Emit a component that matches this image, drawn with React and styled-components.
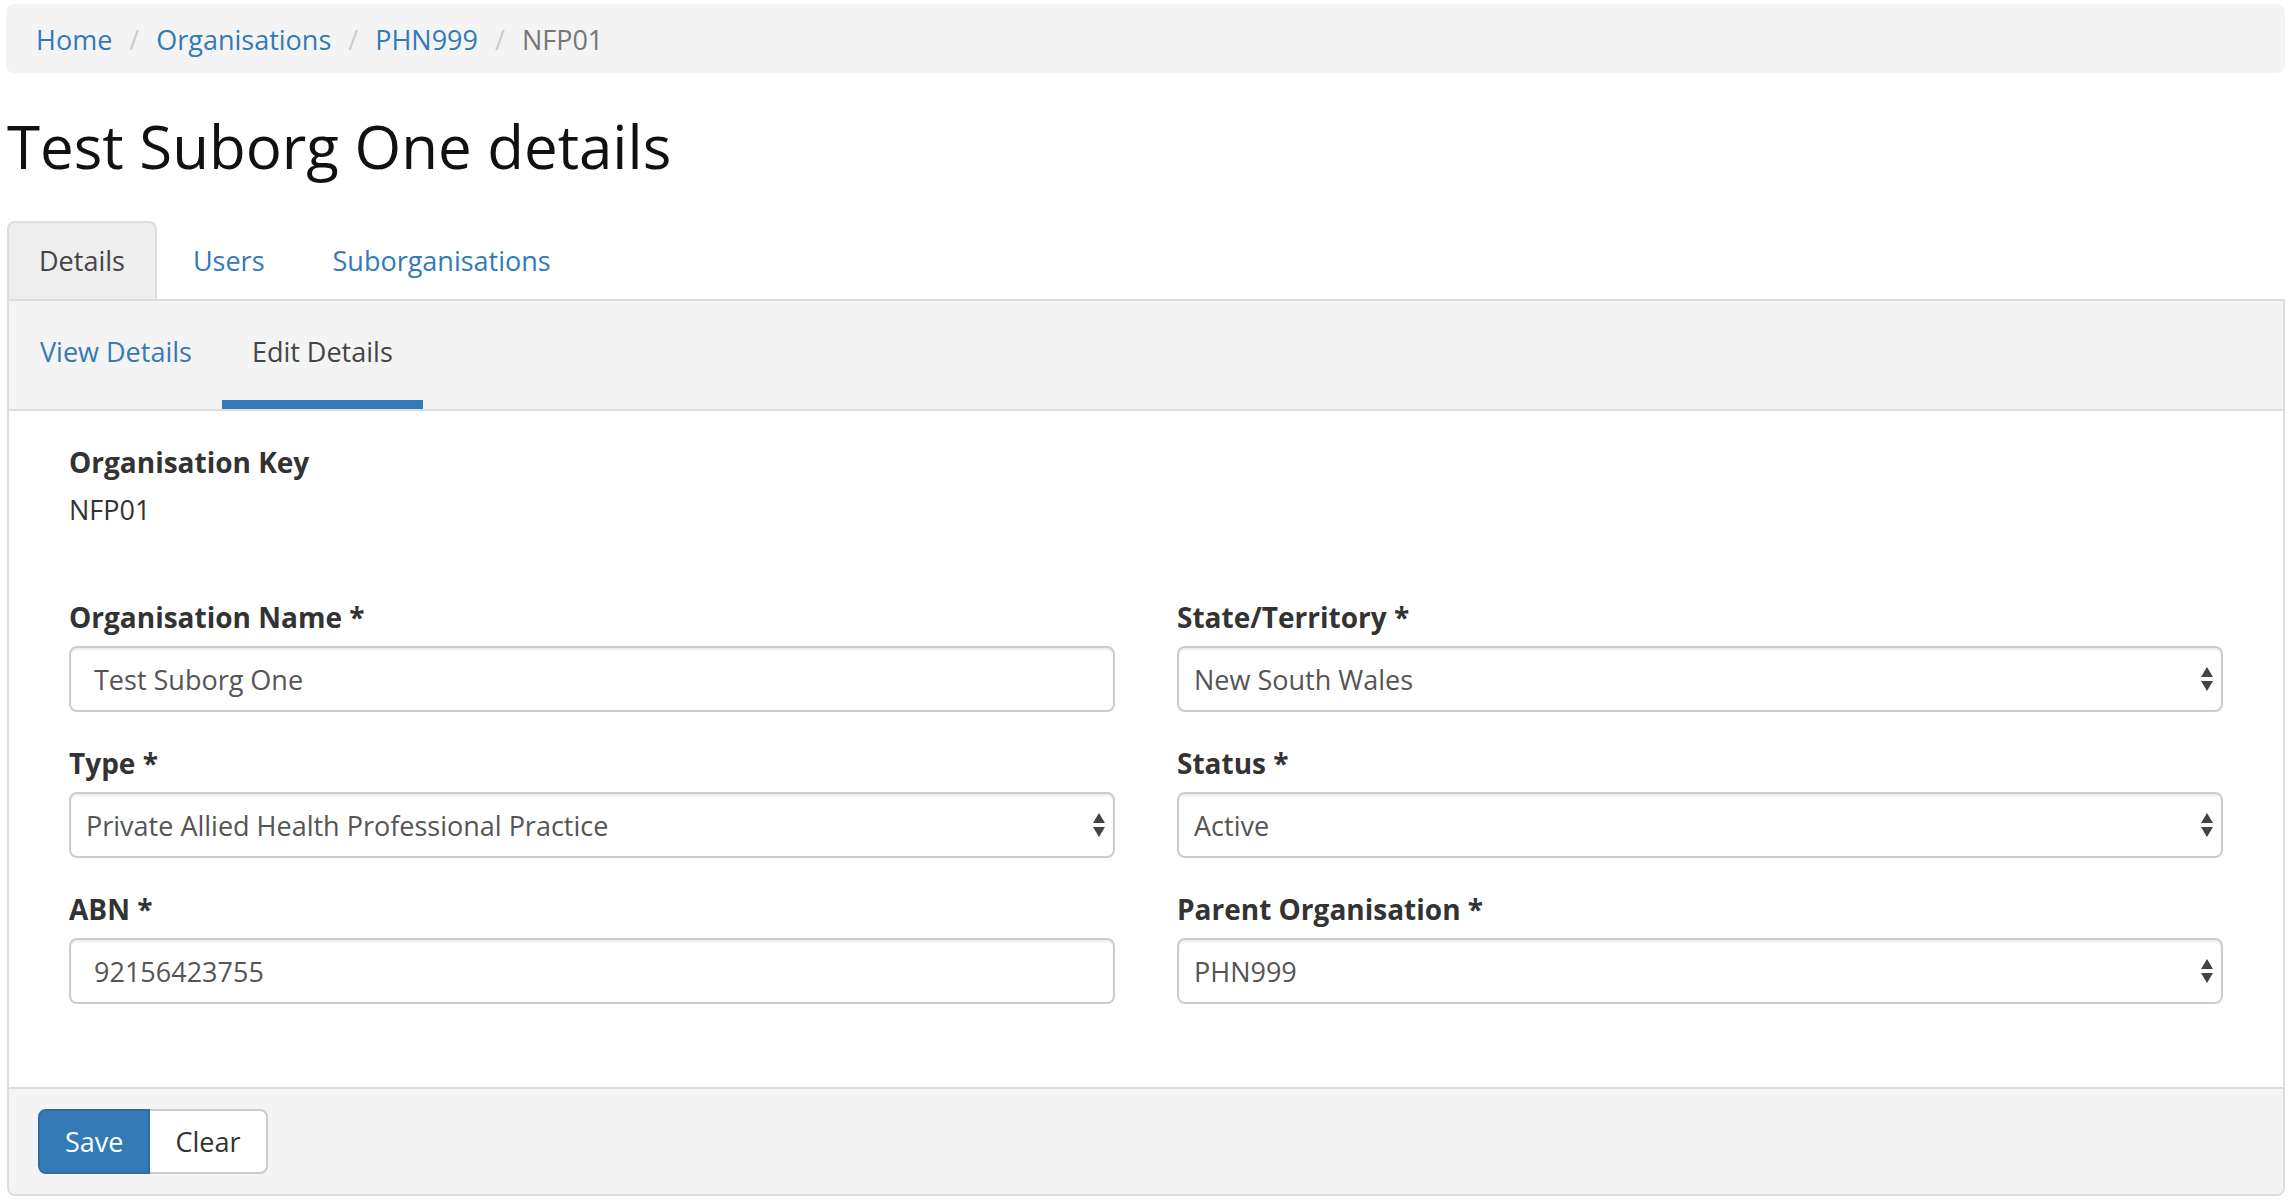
import React from "react";
import styled, { createGlobalStyle } from "styled-components";

const Global = createGlobalStyle`
  html, body { margin: 0; padding: 0; background: #fff; }
  body { font-family: "Open Sans", "Liberation Sans", sans-serif; font-size: 27px; line-height: 1.43; color: #333; }
  * { box-sizing: border-box; }
`;

const Page = styled.div`
  padding: 4px 9px 0 6px;
`;

const Breadcrumb = styled.nav`
  display: flex;
  align-items: center;
  height: 69px;
  padding: 2px 30px 0;
  background: #f4f4f4;
  border-radius: 8px;
  font-size: 27px;
  line-height: 38px;
`;

const Crumb = styled.a`
  color: ${(p) => (p.$active ? "#777" : "#337ab7")};
  text-decoration: none;
`;

const Sep = styled.span`
  color: #ccc;
  margin: 0 17px;
`;

const Title = styled.h1`
  margin: 40px 0 42px 1px;
  font-size: 60px;
  font-weight: 400;
  line-height: 66px;
  color: #111;
`;

const TabList = styled.div`
  display: flex;
  padding-left: 1px;
`;

const Tab = styled.a`
  display: block;
  margin-right: 4px;
  padding: 19px 30px 19px;
  border: 2px solid ${(p) => (p.$active ? "#ddd" : "transparent")};
  border-bottom: none;
  border-radius: 8px 8px 0 0;
  background: ${(p) => (p.$active ? "#eeeeee" : "transparent")};
  color: ${(p) => (p.$active ? "#444" : "#337ab7")};
  text-decoration: none;
  line-height: 38px;
`;

const Panel = styled.div`
  margin-left: 1px;
  border: 2px solid #ddd;
  border-radius: 0 0 8px 8px;
  overflow: hidden;
`;

const SubBar = styled.div`
  display: flex;
  background: #f4f4f4;
  border-bottom: 2px solid #ddd;
  padding-left: 1px;
`;

const SubTab = styled.a`
  display: flex;
  align-items: center;
  height: 108px;
  padding: 2px 30px 0;
  border-bottom: 9px solid ${(p) => (p.$active ? "#337ab7" : "transparent")};
  color: ${(p) => (p.$active ? "#444" : "#337ab7")};
  text-decoration: none;
  line-height: 38px;
`;

const Body = styled.div`
  padding: 32px 60px 51px 60px;
  background: #fff;
`;

const KeyBlock = styled.div`
  margin-bottom: 69px;
`;

const Label = styled.label`
  display: block;
  font-size: 28px;
  font-weight: 700;
  color: #333;
  line-height: 38px;
  margin-bottom: 10px;
`;

const Value = styled.div`
  line-height: 38px;
  color: #333;
`;

const Grid = styled.div`
  display: grid;
  grid-template-columns: 1fr 1fr;
  column-gap: 62px;
`;

const Group = styled.div`
  margin-bottom: 32px;
`;

const fieldBase = `
  display: block;
  width: 100%;
  height: 66px;
  border: 2px solid #ccc;
  border-radius: 8px;
  box-shadow: inset 0 2px 2px rgba(0, 0, 0, 0.075);
  background: #fff;
  font-family: "Open Sans", "Liberation Sans", sans-serif;
  font-size: 27px;
  color: #555;
  outline: none;
`;

const TextInput = styled.input`
  ${fieldBase}
  padding: 0 23px;
`;

const SelectWrap = styled.div`
  position: relative;
`;

const Select = styled.select`
  ${fieldBase}
  appearance: none;
  -webkit-appearance: none;
  padding: 0 40px 0 15px;
`;

const Arrows = styled.svg`
  position: absolute;
  right: 10px;
  top: 21px;
  pointer-events: none;
`;

const Footer = styled.div`
  display: flex;
  padding: 20px 29px 20px;
  background: #f4f4f4;
  border-top: 2px solid #ddd;
`;

const Button = styled.button`
  height: 65px;
  padding: 0 25px;
  font-family: "Open Sans", "Liberation Sans", sans-serif;
  font-size: 27px;
  border: 2px solid ${(p) => (p.$primary ? "#2e6da4" : "#ccc")};
  background: ${(p) => (p.$primary ? "#337ab7" : "#fff")};
  color: ${(p) => (p.$primary ? "#fff" : "#333")};
  border-radius: ${(p) => (p.$primary ? "8px 0 0 8px" : "0 8px 8px 0")};
  ${(p) => (p.$primary ? "" : "border-left: none;")}
`;

function SelectField({ value }) {
  return (
    <SelectWrap>
      <Select defaultValue={value}>
        <option>{value}</option>
      </Select>
      <Arrows width="12" height="25" viewBox="0 0 12 25">
        <polygon points="6,0 12,10 0,10" fill="#444" />
        <polygon points="0,14 12,14 6,24" fill="#444" />
      </Arrows>
    </SelectWrap>
  );
}

export default function App() {
  return (
    <>
      <Global />
      <Page>
        <Breadcrumb>
          <Crumb href="#">Home</Crumb>
          <Sep>/</Sep>
          <Crumb href="#">Organisations</Crumb>
          <Sep>/</Sep>
          <Crumb href="#">PHN999</Crumb>
          <Sep>/</Sep>
          <Crumb $active>NFP01</Crumb>
        </Breadcrumb>
        <Title>Test Suborg One details</Title>
        <TabList>
          <Tab $active>Details</Tab>
          <Tab href="#">Users</Tab>
          <Tab href="#">Suborganisations</Tab>
        </TabList>
        <Panel>
          <SubBar>
            <SubTab href="#">View Details</SubTab>
            <SubTab $active>Edit Details</SubTab>
          </SubBar>
          <Body>
            <KeyBlock>
              <Label>Organisation Key</Label>
              <Value>NFP01</Value>
            </KeyBlock>
            <Grid>
              <Group>
                <Label>Organisation Name *</Label>
                <TextInput defaultValue="Test Suborg One" />
              </Group>
              <Group>
                <Label>State/Territory *</Label>
                <SelectField value="New South Wales" />
              </Group>
              <Group>
                <Label>Type *</Label>
                <SelectField value="Private Allied Health Professional Practice" />
              </Group>
              <Group>
                <Label>Status *</Label>
                <SelectField value="Active" />
              </Group>
              <Group>
                <Label>ABN *</Label>
                <TextInput defaultValue="92156423755" />
              </Group>
              <Group>
                <Label>Parent Organisation *</Label>
                <SelectField value="PHN999" />
              </Group>
            </Grid>
          </Body>
          <Footer>
            <Button $primary>Save</Button>
            <Button>Clear</Button>
          </Footer>
        </Panel>
      </Page>
    </>
  );
}
